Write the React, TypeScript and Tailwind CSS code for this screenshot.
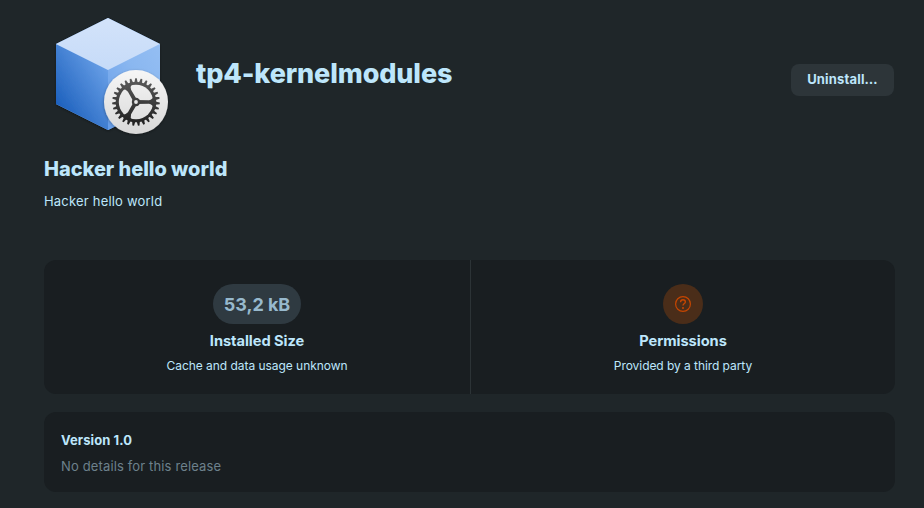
import React from "react";

const TEETH = Array.from({ length: 27 }, (_, i) => (i * 360) / 27);
const SPOKES = [0, 120, 240];

function PackageIcon() {
  return (
    <svg width="128" height="128" viewBox="0 0 128 128" className="shrink-0 overflow-visible">
      <defs>
        <linearGradient id="top" x1="0" y1="0" x2="0" y2="1">
          <stop offset="0" stopColor="#d3e3fa" />
          <stop offset="1" stopColor="#c6dbf8" />
        </linearGradient>
        <linearGradient id="left" gradientUnits="userSpaceOnUse" x1="14" y1="98" x2="70" y2="62">
          <stop offset="0" stopColor="#1c60bd" />
          <stop offset="1" stopColor="#6da3e9" />
        </linearGradient>
        <linearGradient id="right" x1="0" y1="1" x2="1" y2="0">
          <stop offset="0" stopColor="#649ce8" />
          <stop offset="0.6" stopColor="#8ab7f0" />
          <stop offset="1" stopColor="#94bef3" />
        </linearGradient>
        <linearGradient id="disc" x1="0" y1="0" x2="0" y2="1">
          <stop offset="0" stopColor="#f6f6f6" />
          <stop offset="1" stopColor="#d8d8d8" />
        </linearGradient>
        <linearGradient id="gear" gradientUnits="userSpaceOnUse" x1="0" y1="-24" x2="0" y2="24">
          <stop offset="0" stopColor="#5c5c5c" />
          <stop offset="1" stopColor="#1e1e1e" />
        </linearGradient>
        <filter id="shade" x="-20%" y="-20%" width="140%" height="140%">
          <feDropShadow dx="0" dy="1" stdDeviation="1.8" floodColor="#000" floodOpacity="0.35" />
        </filter>
        <mask id="gearMask" maskUnits="userSpaceOnUse" x="-26" y="-26" width="52" height="52">
          <circle r="20.3" fill="#fff" />
          {TEETH.map((a) => (
            <path key={a} d="M19-1.7L23.8-.8V.8L19 1.7Z" fill="#fff" transform={`rotate(${a - 90})`} />
          ))}
          <circle r="17.2" fill="#000" />
          {SPOKES.map((a) => (
            <path
              key={a}
              d="M0-2L13-1.8Q16.5-2.5 18-6V6Q16.5 2.5 13 1.8L0 2Z"
              fill="#fff"
              transform={`rotate(${a})`}
            />
          ))}
          <circle r="4.2" fill="#fff" />
          <circle r="1.9" fill="#000" />
        </mask>
      </defs>
      <g filter="url(#shade)">
        <path d="M64 8L116 34V94L64 120L12 94V34Z" fill="#7aadef" />
        <path d="M12 34L64 60V120L12 94Z" fill="url(#left)" />
        <path d="M116 34L64 60V120L116 94Z" fill="url(#right)" />
        <path d="M64 8L116 34L64 60L12 34Z" fill="url(#top)" />
      </g>
      <g transform="translate(92 92)">
        <circle r="32" fill="url(#disc)" filter="url(#shade)" />
        <rect x="-26" y="-26" width="52" height="52" fill="url(#gear)" mask="url(#gearMask)" />
      </g>
    </svg>
  );
}

function QuestionIcon() {
  return (
    <svg width="16" height="16" viewBox="0 0 16 16" fill="none" stroke="#c64600">
      <circle cx="8" cy="8" r="7.4" strokeWidth="1.2" />
      <path d="M5.6 6.2V5.9A2.4 2.2 0 0 1 10.4 5.9C10.4 7.5 8 7.5 8 9.6" strokeWidth="1.4" />
      <circle cx="8" cy="12" r="1" fill="#c64600" stroke="none" />
    </svg>
  );
}

export default function App() {
  return (
    <main className="flex h-[508px] w-[924px] flex-col overflow-hidden bg-[#1f2629] pl-11 pr-[29px] pt-2.5 font-['Inter',sans-serif] text-[#bde6fb]">
      <header className="flex h-32 items-center pr-px">
        <PackageIcon />
        <h1 className="ml-6 whitespace-nowrap text-[27px] font-extrabold leading-8 tracking-[-0.12px]">
          tp4-kernelmodules
        </h1>
        <button className="ml-auto mt-3 h-8 w-[103px] rounded-lg bg-[#2d3539] pb-px text-[13px] font-bold leading-[31px] tracking-[0.17px]">
          Uninstall…
        </button>
      </header>
      <h2 className="mt-[17px] text-[20px] font-extrabold leading-7 tracking-[-0.04px]">Hacker hello world</h2>
      <p className="mt-2 text-[13px] leading-5 tracking-[0.2px]">Hacker hello world</p>
      <section className="mt-[49px] flex h-[134px] shrink-0 rounded-xl bg-[#191e21]">
        <div className="flex w-[427px] flex-col items-center border-r border-[#2c3336] pt-6">
          <div className="flex h-10 w-[88px] items-center justify-center rounded-full bg-[#2f3a41] text-[18px] font-bold tracking-[-0.05px] text-[#97b9cd]">
            53,2 kB
          </div>
          <h3 className="mt-1.5 text-[14.67px] font-bold leading-[22px] tracking-[-0.06px]">Installed Size</h3>
          <p className="mt-1 text-[12px] leading-5 tracking-[-0.04px]">Cache and data usage unknown</p>
        </div>
        <div className="flex w-[424px] flex-col items-center pt-6">
          <div className="flex size-10 items-center justify-center rounded-full bg-[#4a2d19]">
            <QuestionIcon />
          </div>
          <h3 className="mt-1.5 text-[14.67px] font-bold leading-[22px] tracking-[-0.06px]">Permissions</h3>
          <p className="mt-1 text-[12px] leading-5 tracking-[-0.06px]">Provided by a third party</p>
        </div>
      </section>
      <section className="mt-[18px] h-20 shrink-0 rounded-xl bg-[#191e21] pl-[17px] pt-[18px]">
        <h3 className="text-[13px] font-bold leading-5 tracking-[0.08px]">Version 1.0</h3>
        <p className="mt-1.5 text-[13px] leading-5 tracking-[0.14px] text-[#6d818c]">
          No details for this release
        </p>
      </section>
    </main>
  );
}
